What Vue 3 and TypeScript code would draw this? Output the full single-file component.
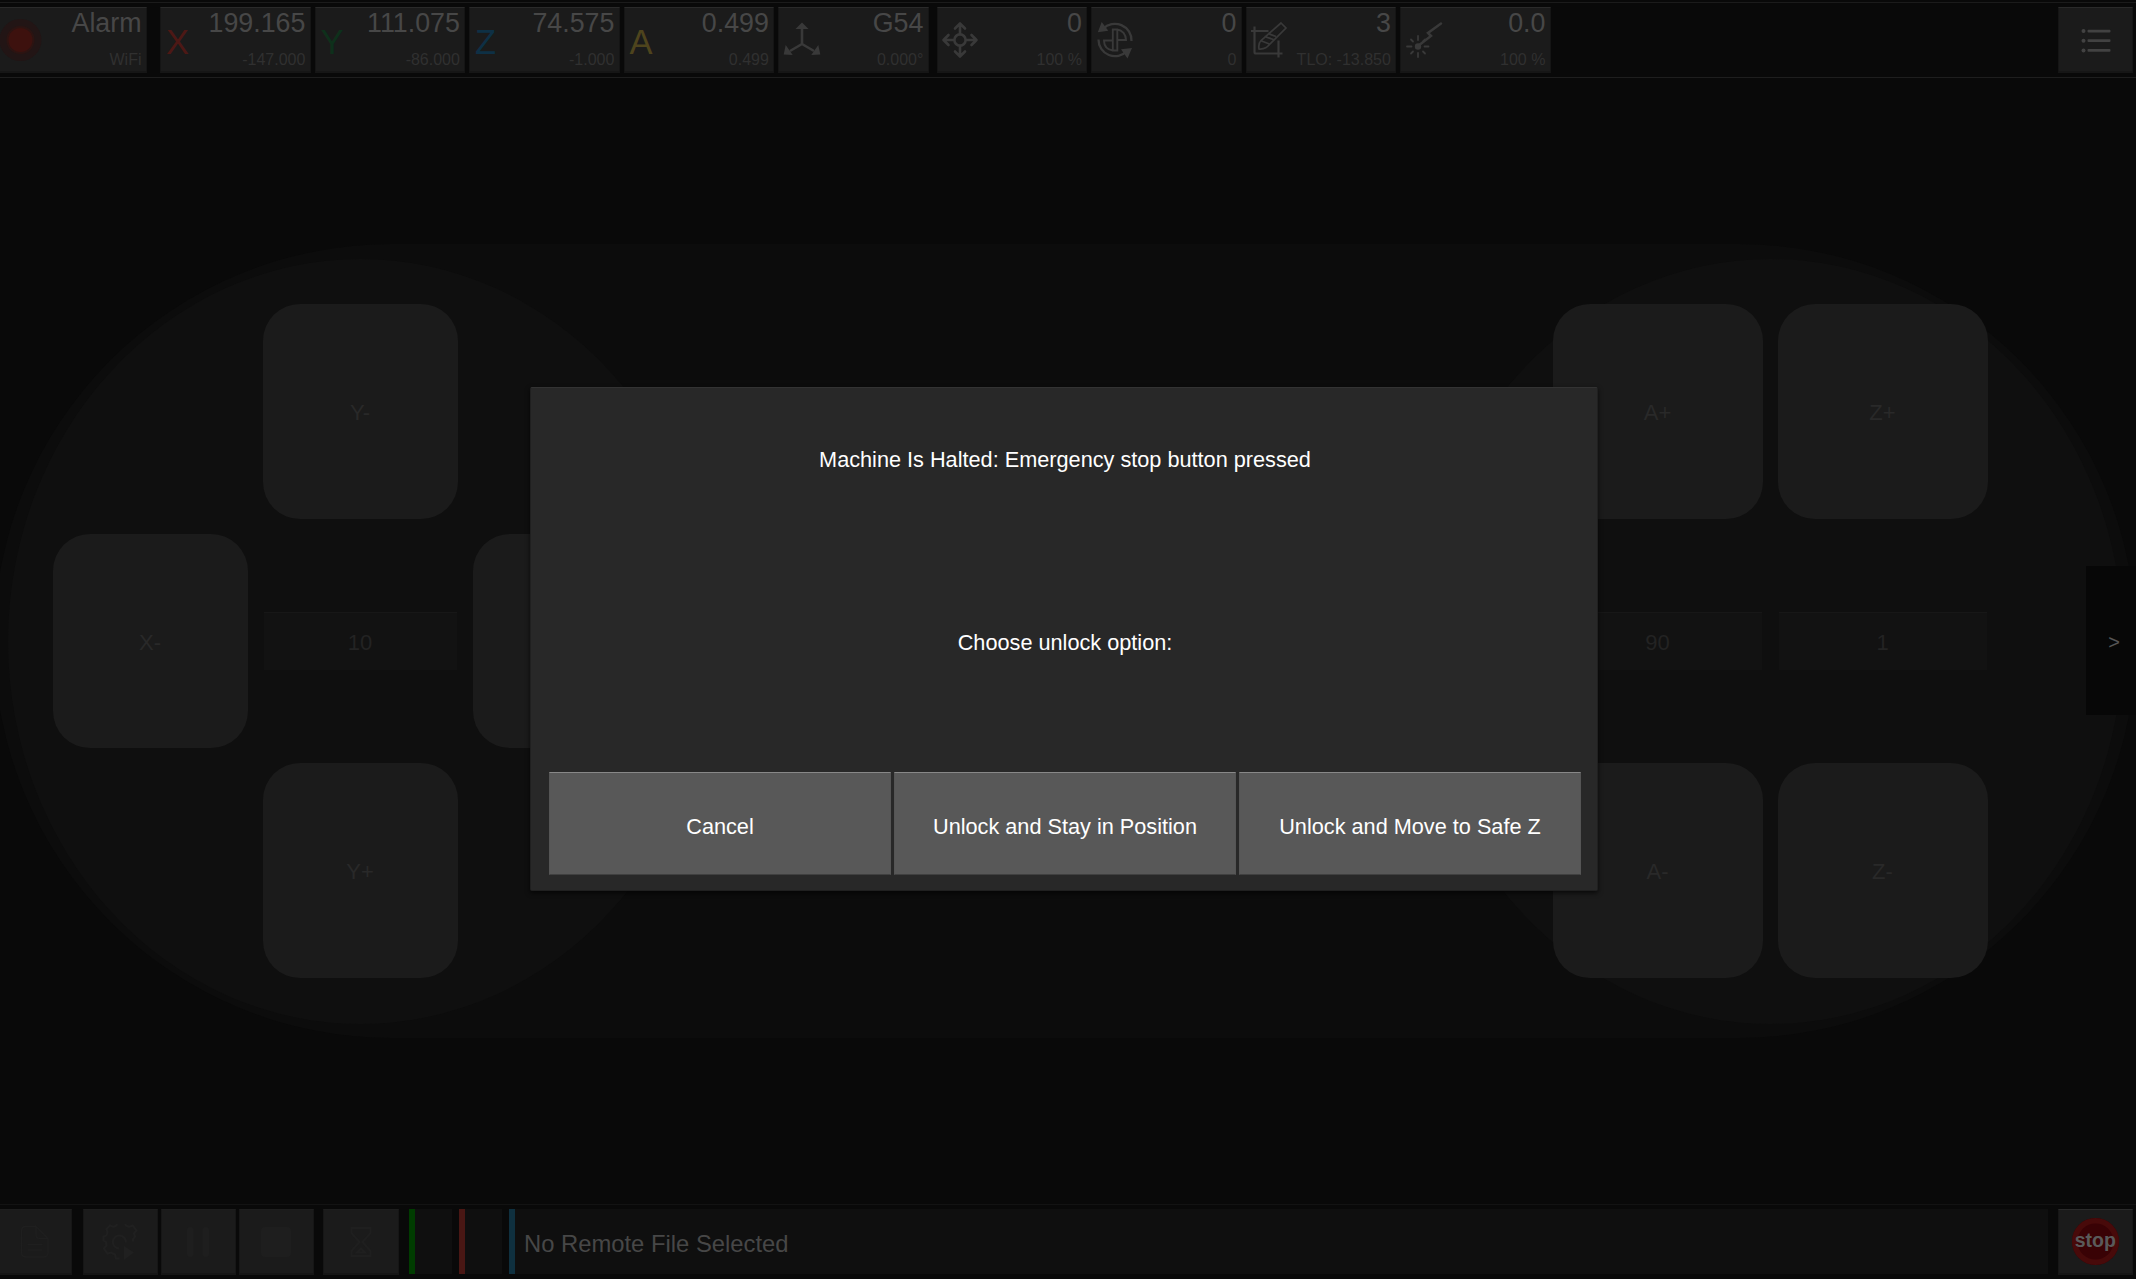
<script setup lang="ts">
interface Readout {
  main: string
  sub: string
  axis?: string
  color?: string
  icon?: string
}

const axes: Readout[] = [
  { axis: 'X', color: '#4d1815', main: '199.165', sub: '-147.000' },
  { axis: 'Y', color: '#0e301b', main: '111.075', sub: '-86.000' },
  { axis: 'Z', color: '#0e3045', main: '74.575', sub: '-1.000' },
  { axis: 'A', color: '#4e441d', main: '0.499', sub: '0.499' },
  { icon: 'origin', main: 'G54', sub: '0.000°' },
]
const states: Readout[] = [
  { icon: 'feed', main: '0', sub: '100 %' },
  { icon: 'spindle', main: '0', sub: '0' },
  { icon: 'tool', main: '3', sub: 'TLO: -13.850' },
  { icon: 'laser', main: '0.0', sub: '100 %' },
]
const groups: Readout[][] = [axes, states]
const options: string[] = ['Cancel', 'Unlock and Stay in Position', 'Unlock and Move to Safe Z']
</script>

<template>
  <div class="screen">
    <header class="topbar">
      <div class="cell status">
        <svg class="led" width="44" height="44" viewBox="0 0 44 44">
          <circle cx="22.500" cy="22" r="21" fill="#221515" />
          <circle cx="22.500" cy="22" r="14" fill="#2c1412" />
          <circle cx="22.500" cy="22" r="12" fill="#3d110e" />
        </svg>
        <div class="values"><span class="big">Alarm</span><span class="small">WiFi</span></div>
      </div>
      <div v-for="(g, gi) in groups" :key="gi" class="group">
        <div v-for="(c, i) in g" :key="i" class="cell readout">
          <span v-if="c.axis" class="axis" :style="{ color: c.color }">{{ c.axis }}</span>
          <svg v-else class="icon" width="38" height="38" viewBox="0 0 38 38" fill="none" stroke="#393939" stroke-width="2.6">
            <g v-if="c.icon === 'origin'">
              <path d="M19 6v17M19 23L7 30M19 23l12 7" />
              <path d="M19 1.500l6.500 6.500h-13zM.7 33.500l2-9.500 7 10zM37.300 33.500l-2-9.500-7 10z" fill="#393939" stroke="none" />
            </g>
            <g v-else-if="c.icon === 'feed'" stroke-linecap="round" stroke-linejoin="round">
              <circle cx="19" cy="19" r="5.600" />
              <path d="M19 13V3M14 7.500l5-5 5 5M19 25v10M14 30.500l5 5 5-5M13 19H3M7.500 14l-5 5 5 5M25 19h10M30.500 14l5 5-5 5" />
            </g>
            <g v-else-if="c.icon === 'spindle'" stroke-width="2.300">
              <path d="M7 8A16.500 16.500 0 0 1 35.500 20M2.500 18.500A16.500 16.500 0 0 0 31 30" />
              <path d="M5.700 1L1.800 11.200l10.500-1.500zM36 27l-4.500 10.500L25 28.200z" fill="#393939" stroke="none" />
              <path d="M16.800 8.500h4.500v21h-4.500zM21.300 8.500c5 .5 8.700 5 8.700 10.500h-8.700M16.800 29.500C11 28.500 8 24.500 8 19.500h8.500" stroke-width="1.900" />
            </g>
            <g v-else-if="c.icon === 'tool'" stroke-width="2.200">
              <path d="M4.500 5.500v25.500q0 1.500 1.500 1.500h26.500M1 10h17.500M28.500 19.500v17" />
              <path d="M31 2l5 5-18.500 18.500c-2 2-6.500 3-8.500 2.500-.5-3 0-6.500 2-8.500zM14.500 15.500l9 3M11.500 20l8 3M18 12.500l8 3" stroke-width="1.700" />
            </g>
            <g v-else stroke-linecap="round" stroke-width="2.500">
              <path d="M36 2.500L23 12l3 3-13 10" />
              <circle cx="13" cy="25.500" r="3.200" fill="#393939" stroke="none" />
              <path d="M13 15v4M13 32v4M2 25.500h4.500M19.500 25.500h4M6 18.500l2 2M18 30.500l2 2M6 32.500l2-2M18 20.500l2-2" stroke-width="1.800" />
            </g>
          </svg>
          <div class="values"><span class="big">{{ c.main }}</span><span class="small">{{ c.sub }}</span></div>
        </div>
      </div>
      <button class="cell menu" aria-label="Menu">
        <svg width="30" height="26" viewBox="0 0 30 26" fill="#424242">
          <circle cx="2.500" cy="3" r="2" /><rect x="6.500" y="1.700" width="23" height="2.800" rx="1" />
          <circle cx="2.500" cy="12.700" r="2" /><rect x="6.500" y="11.300" width="23" height="2.800" rx="1" />
          <circle cx="2.500" cy="22.500" r="2" /><rect x="6.500" y="21" width="23" height="2.800" rx="1" />
        </svg>
      </button>
    </header>

    <main class="stage">
      <div class="pad">
        <section class="disc">
          <div class="jog xy">
            <i></i><button class="key">Y-</button><i></i>
            <button class="key">X-</button><div class="step">10</div><button class="key">X+</button>
            <i></i><button class="key">Y+</button><i></i>
          </div>
        </section>
        <section class="disc">
          <div class="jog az">
            <button class="key">A+</button><button class="key">Z+</button>
            <div class="step">90</div><div class="step">1</div>
            <button class="key">A-</button><button class="key">Z-</button>
          </div>
        </section>
      </div>
      <button class="drawer">&gt;</button>
    </main>

    <footer class="bottombar">
      <button class="cell act file" aria-label="File">
        <svg width="34" height="34" viewBox="0 0 34 34" fill="none" stroke="#1f1f1f" stroke-width="1.300">
          <path d="M18 1.500H8q-4.500 0-4.500 4.500v21.500q0 4.500 4.500 4.500h17.500q4.500 0 4.500-4.500V13.500L18 1.500v8q0 4 4 4h8M9.500 19.500h15M9.500 25h15" />
        </svg>
      </button>
      <button class="cell act run" aria-label="Run">
        <svg width="36" height="36" viewBox="0 0 36 36" fill="none" stroke="#202020" stroke-width="2">
          <path d="M17.500 34.500h-3.500l-1-4-4-2-3.500 1-3.500-5 2.500-3-.5-3.500-2.500-1.500v-4l3-1 1-3-1-3.500 3.500-3.500 3.500 1.500 3-1.500 1-3.500h7l1.500 3.500 3 1.500 3.500-1.500 4 5-2.500 3 1 3-2 2.500v2.500" />
          <path d="M17 24.500a6.500 6.500 0 1 1 6.800-6" />
          <path d="M22 22l10 6.500L22 36z" fill="#202020" stroke="none" />
        </svg>
      </button>
      <button class="cell act pause" aria-label="Pause">
        <svg width="34" height="34" viewBox="0 0 34 34" fill="#1e1e1e"><rect x="6" y="2" width="6.500" height="30" rx="3" /><rect x="21.500" y="2" width="6.500" height="30" rx="3" /></svg>
      </button>
      <button class="cell act halt" aria-label="Halt">
        <svg width="34" height="34" viewBox="0 0 34 34" fill="#1e1e1e"><rect x="2" y="2" width="30" height="30" rx="4" /></svg>
      </button>
      <button class="cell act wait" aria-label="Wait">
        <svg width="34" height="34" viewBox="0 0 34 34" fill="none" stroke="#1f1f1f" stroke-width="2">
          <path d="M7.500 3h19v5L18.500 17l8 9v5h-19v-5l8-9-8-9zM13 27.500l4-4 4 4z" />
        </svg>
      </button>
      <div class="slot green"></div>
      <div class="slot red"></div>
      <div class="slot blue"><span>No Remote File Selected</span></div>
      <button class="cell act stop">
        <span class="sign">stop</span>
      </button>
    </footer>

    <div class="dialog" role="dialog">
      <p>Machine Is Halted: Emergency stop button pressed</p>
      <p>Choose unlock option:</p>
      <div class="options">
        <button v-for="o in options" :key="o">{{ o }}</button>
      </div>
    </div>
  </div>
</template>

<style>
body {
  background: #090909;
  overflow: hidden;
}
</style>

<style scoped>
.screen,
.screen * {
  box-sizing: border-box;
}
.screen {
  position: relative;
  display: flex;
  flex-direction: column;
  width: 2136px;
  height: 1279px;
  overflow: hidden;
  background: #090909;
  font-family: "Liberation Sans", Arial, sans-serif;
}
button {
  margin: 0;
  padding: 0;
  border: 0;
  font: inherit;
}
svg {
  display: block;
}
.topbar {
  display: flex;
  flex: none;
  height: 76px;
  margin-top: 2px;
  padding: 4px 3px 0 0;
  border-top: 1px solid #1b1b1b;
  border-bottom: 1px solid #1e1e1e;
}
.cell {
  flex: none;
  height: 66px;
  background: #1b1b1b;
  border: 1px solid #151515;
  border-top-color: #2a2a2a;
  border-bottom: 2px solid #161616;
}
.status {
  display: flex;
  width: 147px;
  border-left: 0;
}
.led {
  flex: none;
  margin: 10px 0 0 -2px;
}
.group {
  display: flex;
  gap: 4px;
  margin-left: 13.4px;
}
.group + .group {
  margin-left: 8px;
}
.readout {
  display: flex;
  width: 150.5px;
}
.axis {
  width: 30px;
  padding-left: 4.5px;
  font-size: 34.5px;
  line-height: 38px;
  margin-top: 15px;
}
.icon {
  flex: none;
  margin: 13px 0 0 3.2px;
}
.values {
  display: flex;
  flex: 1;
  flex-direction: column;
  align-items: flex-end;
  padding-right: 4.5px;
  white-space: nowrap;
}
.big {
  flex: none;
  height: 37px;
  margin-top: -1px;
  color: #474747;
  font-size: 26.8px;
  line-height: 32px;
}
.small {
  flex: none;
  color: #303030;
  font-size: 16px;
  line-height: 32px;
}
.menu {
  display: grid;
  place-items: center;
  width: 75px;
  margin-left: auto;
  padding: 3px 0 0 0;
}
.stage {
  display: flex;
  flex: 1;
  justify-content: space-between;
}
.pad {
  display: flex;
  flex: none;
  align-items: center;
  justify-content: space-between;
  width: 2142px;
  height: 794px;
  margin: 166px -50px 0 -6px;
  padding: 0 13.5px;
  border-radius: 397px;
  background: #0c0c0c;
}
.disc {
  display: grid;
  place-items: center;
  width: 705px;
  height: 765px;
  border-radius: 50%;
  background: #0f0f0f;
}
.jog {
  display: grid;
  grid-auto-rows: 214.5px;
  gap: 15px;
  align-items: center;
  font-size: 22px;
  color: #292929;
}
.xy {
  grid-template-columns: repeat(3, 195px);
}
.az {
  grid-template-columns: repeat(2, 210px);
}
.key {
  height: 100%;
  padding-top: 3px;
  border-radius: 37px;
  background: #1b1b1b;
  color: #292929;
}
.step {
  height: 58px;
  margin: 0 1px;
  border-top: 1px solid #171717;
  background: #121212;
  color: #232323;
  line-height: 60px;
  text-align: center;
}
.drawer {
  position: relative;
  flex: none;
  width: 50px;
  height: 149px;
  margin: 488px 0 0;
  padding: 3px 0 0 6px;
  background: #070707;
  color: #555;
  font-size: 20px;
}
.bottombar {
  display: flex;
  flex: none;
  height: 75px;
  padding: 4px 3px 0 0;
  border-top: 1px solid #131313;
}
.act {
  display: grid;
  place-items: center;
  width: 75.5px;
  border-color: #161616;
  border-top-color: #1e1e1e;
}
.file {
  width: 72px;
  padding-right: 2px;
  border-left: 0;
}
.run {
  margin-left: 10.5px;
}
.wait {
  margin-left: 9px;
}
.pause,
.halt {
  margin-left: 2.5px;
}
.slot {
  flex: none;
  width: 43px;
  height: 65px;
  margin-left: 7px;
  border-left: 6px solid;
  background: #0f0f0f;
}
.green {
  margin-left: 10px;
  border-color: #003c00;
}
.red {
  border-color: #491714;
}
.blue {
  flex: 1;
  padding: 2px 0 0 9.5px;
  border-color: #0f303f;
  color: #474747;
  font-size: 23.8px;
  line-height: 66px;
}
.stop {
  margin-left: 10px;
  border-top-color: #2a2a2a;
}
.sign {
  width: 47px;
  height: 47px;
  border-radius: 50%;
  background: #390205;
  box-shadow: inset 0 0 0 5.5px #480a0a;
  color: #5a5a5a;
  font-size: 19.5px;
  font-weight: bold;
  line-height: 44px;
  text-align: center;
}
.dialog {
  position: absolute;
  top: 387px;
  left: 530px;
  display: flex;
  flex-direction: column;
  width: 1067.5px;
  height: 504px;
  padding: 0 16.5px 16px 19px;
  border: 1px solid #202020;
  border-top-color: #333;
  border-radius: 2px;
  background: #282828;
  box-shadow: 0 2px 5px #000000b0;
  color: #fff;
  font-size: 21.7px;
  text-align: center;
}
.dialog p {
  height: 183px;
  margin: 0;
  line-height: 144px;
}
.dialog .options {
  display: flex;
  gap: 3px;
  height: 103px;
  margin: auto -1px -1px;
}
.options button {
  flex: 1;
  padding-top: 7px;
  border: 1px solid #555;
  border-top-color: #888;
  border-bottom-color: #404040;
  background: #585858;
  color: #fff;
}
</style>
